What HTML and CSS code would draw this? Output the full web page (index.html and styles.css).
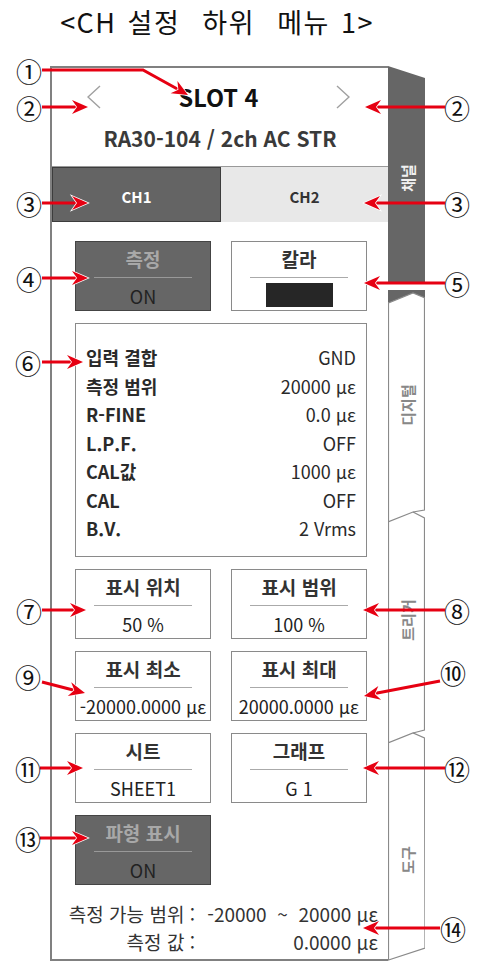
FILE: index.html
```html
<!DOCTYPE html>
<html lang="ko">
<head>
    <meta charset="UTF-8">
    <meta name="viewport" content="width=device-width, initial-scale=1.0">
    <title>CH 설정 하위 메뉴 1</title>
    <link rel="stylesheet" href="styles.css">
</head>
<body>

    <h1 class="title">&lt;CH 설정&nbsp; 하위&nbsp; 메뉴 1&gt;</h1>

    <div class="figure">
        <div class="panel">
            <!-- Slot header -->
            <div class="slot-head">
                <div class="slot-line">
                    <svg class="chev" width="14" height="24" viewBox="0 0 14 24"><polyline points="13,1 1,12 13,23"/></svg>
                    <span class="slot-name">SLOT 4</span>
                    <svg class="chev" width="14" height="24" viewBox="0 0 14 24"><polyline points="1,1 13,12 1,23"/></svg>
                </div>
                <div class="slot-model">RA30-104 / 2ch AC STR</div>
            </div>

            <!-- Channel tabs -->
            <div class="ch-tabs">
                <div class="ch-tab active">CH1</div>
                <div class="ch-tab">CH2</div>
            </div>

            <div class="settings">
                <div class="key on">
                    <span class="key-label">측정</span>
                    <span class="key-rule"></span>
                    <span class="key-value">ON</span>
                </div>
                <div class="key">
                    <span class="key-label">칼라</span>
                    <span class="key-rule"></span>
                    <span class="swatch"></span>
                </div>

                <div class="info">
                    <div class="info-row"><span class="info-name">입력 결합</span><span>GND</span></div>
                    <div class="info-row"><span class="info-name">측정 범위</span><span>20000 με</span></div>
                    <div class="info-row"><span class="info-name">R-FINE</span><span>0.0 με</span></div>
                    <div class="info-row"><span class="info-name">L.P.F.</span><span>OFF</span></div>
                    <div class="info-row"><span class="info-name">CAL값</span><span>1000 με</span></div>
                    <div class="info-row"><span class="info-name">CAL</span><span>OFF</span></div>
                    <div class="info-row"><span class="info-name">B.V.</span><span>2 Vrms</span></div>
                </div>

                <div class="key">
                    <span class="key-label">표시 위치</span>
                    <span class="key-rule"></span>
                    <span class="key-value">50 %</span>
                </div>
                <div class="key">
                    <span class="key-label">표시 범위</span>
                    <span class="key-rule"></span>
                    <span class="key-value">100 %</span>
                </div>
                <div class="key">
                    <span class="key-label">표시 최소</span>
                    <span class="key-rule"></span>
                    <span class="key-value">-20000.0000 με</span>
                </div>
                <div class="key">
                    <span class="key-label">표시 최대</span>
                    <span class="key-rule"></span>
                    <span class="key-value">20000.0000 με</span>
                </div>
                <div class="key">
                    <span class="key-label">시트</span>
                    <span class="key-rule"></span>
                    <span class="key-value">SHEET1</span>
                </div>
                <div class="key">
                    <span class="key-label">그래프</span>
                    <span class="key-rule"></span>
                    <span class="key-value">G 1</span>
                </div>
                <div class="key on">
                    <span class="key-label">파형 표시</span>
                    <span class="key-rule"></span>
                    <span class="key-value">ON</span>
                </div>
            </div>

            <!-- Measurement readout -->
            <div class="readout">
                <span class="readout-name">측정 가능 범위 :</span>
                <span class="readout-value">-20000&nbsp; ~&nbsp; 20000 με</span>
                <span class="readout-name">측정 값 :</span>
                <span class="readout-value">0.0000 με</span>
            </div>
        </div>

        <!-- Side tabs -->
        <svg class="side-tabs" width="37" height="895" viewBox="0 0 37 895">
            <polygon class="tab-on" points="0,0 37,12 37,217 0,217"/>
            <polygon class="tab-on" points="0,224 37,224 37,232 25,227 0,237"/>
            <polyline class="tab-line" points="37,232 25,227 0.5,237 0.5,894 37,882 36.5,672 25,667 0,677"/>
            <polyline class="tab-line" points="36.5,232 36.5,444 25,446 0,456"/>
            <polyline class="tab-line" points="25,446 36.5,452 36.5,664 25,667"/>
            <text class="tab-text on" transform="translate(19,112) rotate(-90)">채널</text>
            <text class="tab-text" transform="translate(19,339) rotate(-90)">디지털</text>
            <text class="tab-text" transform="translate(19,554) rotate(-90)">트리거</text>
            <text class="tab-text" transform="translate(19,794) rotate(-90)">도구</text>
        </svg>
    </div>

    <!-- Callout numbers and arrows -->
    <svg class="callouts" width="480" height="963" viewBox="0 0 480 963">
        <defs>
            <path id="head" d="M0 0 L-16 -7 L-11 0 L-16 7 Z"/>
        </defs>
        <g class="arrow-line">
            <polyline points="42,70 143,70 181,91"/>
            <line x1="42" y1="107" x2="80" y2="107"/>
            <line x1="445" y1="107" x2="373" y2="107"/>
            <line x1="42" y1="203" x2="80" y2="203"/>
            <line x1="445" y1="203" x2="372" y2="203"/>
            <line x1="42" y1="278" x2="80" y2="278"/>
            <line x1="445" y1="283" x2="372" y2="283"/>
            <line x1="42" y1="362" x2="75" y2="362"/>
            <line x1="42" y1="610" x2="78" y2="610"/>
            <line x1="445" y1="610" x2="371" y2="610"/>
            <line x1="42" y1="682" x2="77" y2="691"/>
            <line x1="440" y1="681" x2="372" y2="694"/>
            <line x1="40" y1="768" x2="75" y2="768"/>
            <line x1="445" y1="768" x2="371" y2="768"/>
            <line x1="40" y1="838" x2="80" y2="838"/>
            <line x1="440" y1="928" x2="371" y2="928"/>
        </g>
        <g class="arrow-head">
            <use href="#head" transform="translate(188,95) rotate(29)"/>
            <use href="#head" transform="translate(88,107)"/>
            <use href="#head" transform="translate(365,107) rotate(180)"/>
            <use href="#head" transform="translate(88,203)"/>
            <use href="#head" transform="translate(364,203) rotate(180)"/>
            <use href="#head" transform="translate(88,278)"/>
            <use href="#head" transform="translate(364,283) rotate(180)"/>
            <use href="#head" transform="translate(83,362)"/>
            <use href="#head" transform="translate(86,610)"/>
            <use href="#head" transform="translate(363,610) rotate(180)"/>
            <use href="#head" transform="translate(85,693) rotate(14)"/>
            <use href="#head" transform="translate(364,696) rotate(169)"/>
            <use href="#head" transform="translate(83,768)"/>
            <use href="#head" transform="translate(363,768) rotate(180)"/>
            <use href="#head" transform="translate(88,838)"/>
            <use href="#head" transform="translate(363,928) rotate(180)"/>
        </g>
        <g class="callout-num">
            <text x="29" y="70">①</text>
            <text x="29" y="107">②</text>
            <text x="457" y="107">②</text>
            <text x="29" y="203">③</text>
            <text x="457" y="203">③</text>
            <text x="29" y="278">④</text>
            <text x="457" y="283">⑤</text>
            <text x="28" y="362">⑥</text>
            <text x="29" y="610">⑦</text>
            <text x="457" y="610">⑧</text>
            <text x="28" y="676">⑨</text>
            <text x="453" y="672">⑩</text>
            <text x="28" y="768">⑪</text>
            <text x="457" y="768">⑫</text>
            <text x="28" y="838">⑬</text>
            <text x="453" y="928">⑭</text>
        </g>
    </svg>

</body>
</html>
```

FILE: styles.css
```css
/* Page */
body {
    margin: 0;
    width: 480px;
    height: 963px;
    position: relative;
    overflow: hidden;
    background: #fff;
    font-family: "Noto Sans CJK KR", "Noto Sans", sans-serif;
    color: #333;
}
.title {
    margin: 0;
    height: 66px;
    padding-right: 46px;
    line-height: 44px;
    text-align: center;
    font-size: 27px;
    font-weight: 400;
    letter-spacing: 1.5px;
    word-spacing: 2px;
    color: #111;
}
/* Figure: panel plus side tabs */
.figure {
    display: flex;
    margin-left: 50px;
    height: 895px;
}
.panel {
    width: 338px;
    box-sizing: border-box;
    border: 2px solid #808080;
    border-right: none;
    display: flex;
    flex-direction: column;
}
/* Slot header */
.slot-head {
    padding: 14px 0 15px;
    border-bottom: 1px solid #999;
    text-align: center;
}
.slot-line {
    display: flex;
    justify-content: space-between;
    align-items: center;
    padding: 0 38px 0 35px;
    height: 30px;
}
.chev polyline {
    fill: none;
    stroke: #a0a0a0;
    stroke-width: 1.4;
}
.slot-name {
    font-size: 23.5px;
    font-weight: 700;
    color: #111;
}
.slot-model {
    margin-top: 13px;
    line-height: 26px;
    font-size: 21px;
    font-weight: 700;
    color: #3a3a3a;
}
/* Channel tabs */
.ch-tabs {
    display: flex;
    height: 55px;
}
.ch-tab {
    flex: 1;
    display: flex;
    align-items: center;
    justify-content: center;
    padding-top: 3px;
    font-size: 15px;
    font-weight: 700;
    background: #e8e8e8;
    color: #333;
}
.ch-tab.active {
    background: #646464;
    border: 1px solid #3c3c3c;
    color: #fff;
}
/* Setting keys */
.settings {
    display: grid;
    grid-template-columns: 136px 136px;
    column-gap: 20px;
    row-gap: 12px;
    padding: 19px 0 0 23px;
}
.key {
    height: 70px;
    box-sizing: border-box;
    border: 1px solid #8a8a8a;
    background: #fff;
    display: flex;
    flex-direction: column;
    align-items: center;
    padding-top: 5px;
}
.key-label {
    font-size: 19px;
    font-weight: 700;
    line-height: 24px;
    color: #333;
}
.key-rule {
    align-self: stretch;
    margin: 6px 18px 0;
    border-top: 1px solid #aaa;
}
.key-value {
    margin-top: 6px;
    font-size: 18px;
    line-height: 24px;
    color: #222;
}
.key.on {
    background: #666;
    border-color: #444;
}
.key.on .key-label {
    color: #a8a8a8;
}
.key.on .key-rule {
    border-color: #999;
}
.swatch {
    margin-top: 5px;
    width: 67px;
    height: 24px;
    background: #262626;
}
/* Channel info box */
.info {
    grid-column: span 2;
    border: 1px solid #8a8a8a;
    padding: 19px 10px 13px;
}
.info-row {
    display: flex;
    justify-content: space-between;
    line-height: 28.5px;
    font-size: 18px;
    color: #2a2a2a;
}
.info-name {
    font-weight: 700;
}
/* Readout */
.readout {
    display: grid;
    grid-template-columns: 143px 1fr;
    margin-top: 15px;
    padding-right: 10px;
    font-size: 19px;
    line-height: 28px;
    color: #333;
    text-align: right;
}
/* Side tabs */
.side-tabs {
    flex: none;
}
.tab-on {
    fill: #666;
}
.tab-line {
    fill: none;
    stroke: #8a8a8a;
    stroke-width: 1.2;
}
.tab-text {
    font-size: 15px;
    font-weight: 700;
    fill: #888;
    text-anchor: middle;
    dominant-baseline: central;
}
.tab-text.on {
    fill: #f0f0f0;
}
/* Callouts */
.callouts {
    position: absolute;
    left: 0;
    top: 0;
    pointer-events: none;
}
.arrow-line {
    fill: none;
    stroke: #e60012;
    stroke-width: 3;
}
.arrow-head use {
    fill: #e60012;
    stroke: #fff;
    stroke-width: 1.5;
    paint-order: stroke;
}
.callout-num text {
    font-size: 26px;
    fill: #111;
    text-anchor: middle;
    dominant-baseline: central;
}
```
